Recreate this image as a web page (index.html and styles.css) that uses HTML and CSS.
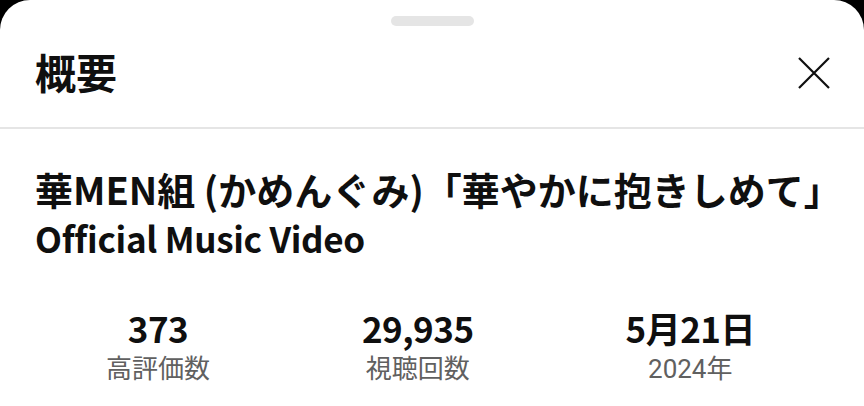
FILE: index.html
```html
<!DOCTYPE html>
<html lang="ja">
<head>
  <meta charset="UTF-8">
  <meta name="viewport" content="width=device-width, initial-scale=1.0">
  <title>概要</title>
  <link rel="stylesheet" href="styles.css">
</head>
<body>
  <div class="sheet">
    <div class="handle-row">
      <div class="handle"></div>
    </div>
    <div class="header">
      <h2>概要</h2>
      <button class="close" aria-label="閉じる">
        <svg width="34" height="34" viewBox="0 0 34 34">
          <path d="M2 2 L32 32 M32 2 L2 32" stroke="#0f0f0f" stroke-width="2.2" fill="none"/>
        </svg>
      </button>
    </div>
    <div class="content">
      <h1 class="title">華MEN組 (かめんぐみ)「華やかに抱きしめて」<br><span class="sub">Official Music Video</span></h1>
      <div class="stats">
        <div class="stat">
          <div class="value">373</div>
          <div class="label">高評価数</div>
        </div>
        <div class="stat">
          <div class="value">29,935</div>
          <div class="label">視聴回数</div>
        </div>
        <div class="stat">
          <div class="value">5月21日</div>
          <div class="label">2024年</div>
        </div>
      </div>
    </div>
  </div>
</body>
</html>
```

FILE: styles.css
```css
html, body {
  margin: 0;
  padding: 0;
  background: #000;
  height: 100%;
  overflow: hidden;
}

body {
  font-family: Roboto, "Noto Sans CJK JP", sans-serif;
  color: #0f0f0f;
}

.sheet {
  background: #fff;
  border-radius: 30px 30px 0 0;
  height: 100%;
}

.handle-row {
  display: flex;
  justify-content: center;
  padding-top: 16px;
}

.handle {
  width: 83px;
  height: 10px;
  border-radius: 5px;
  background: #e5e5e5;
}

.header {
  display: flex;
  align-items: center;
  justify-content: space-between;
  padding: 0 33px 10px 35px;
  height: 91px;
  border-bottom: 2px solid #e5e5e5;
}

.header h2 {
  margin: -2px 0 0;
  font-family: "Noto Sans CJK JP", sans-serif;
  font-size: 41px;
  font-weight: 700;
}

.close {
  border: none;
  background: none;
  padding: 0;
  margin-top: 3px;
  display: flex;
}

.content {
  padding: 0 33px 0 30px;
}

.title {
  margin: 36px 0 0 5px;
  font-family: "Noto Sans CJK JP", sans-serif;
  font-size: 38px;
  font-weight: 700;
  line-height: 48px;
  white-space: nowrap;
}

.title .sub {
  font-size: 35px;
  letter-spacing: -0.3px;
}

.stats {
  display: flex;
  justify-content: space-around;
  margin-top: 46px;
}

.stat {
  display: flex;
  flex-direction: column;
  align-items: center;
}

.value {
  font-family: "Noto Sans CJK JP", sans-serif;
  font-size: 35px;
  font-weight: 700;
  line-height: 40px;
  letter-spacing: -0.5px;
}

.label {
  font-size: 26px;
  color: #606060;
  line-height: 36px;
  margin-top: 3px;
}
```
